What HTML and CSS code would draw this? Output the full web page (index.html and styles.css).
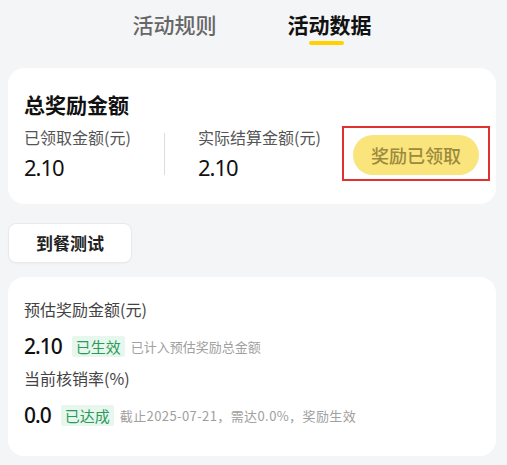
FILE: index.html
```html
<!DOCTYPE html>
<html lang="zh">
<head>
<meta charset="utf-8">
<link rel="stylesheet" href="styles.css">
</head>
<body>
<div class="tabs">
  <div class="tab">活动规则</div>
  <div class="tab active">活动数据<span class="bar"></span></div>
</div>

<section class="card summary">
  <h2 class="title">总奖励金额</h2>
  <div class="row">
    <div class="col col1">
      <div class="label">已领取金额(元)</div>
      <div class="value">2.10</div>
    </div>
    <div class="divider"></div>
    <div class="col col2">
      <div class="label">实际结算金额(元)</div>
      <div class="value">2.10</div>
    </div>
    <div class="mark">
      <div class="claimed">奖励已领取</div>
    </div>
  </div>
</section>

<div class="chip">到餐测试</div>

<section class="card detail">
  <div class="label">预估奖励金额(元)</div>
  <div class="line first">
    <span class="num">2.10</span>
    <span class="tag">已生效</span>
    <span class="note">已计入预估奖励总金额</span>
  </div>
  <div class="label second">当前核销率(%)</div>
  <div class="line last">
    <span class="num">0.0</span>
    <span class="tag">已达成</span>
    <span class="note wide">截止2025-07-21，需达0.0%，奖励生效</span>
  </div>
</section>
</body>
</html>
```
FILE: styles.css
```css
* { box-sizing: border-box; }
body {
  margin: 0;
  background: #f4f5f7;
  font-family: "Noto Sans CJK SC", "Noto Sans", sans-serif;
  color: #1a1a1a;
  width: 507px;
}
.tabs {
  display: flex;
  justify-content: center;
  gap: 71px;
  padding-top: 10px;
  height: 68px;
  padding-right: 3px;
}
.tab {
  position: relative;
  font-size: 21px;
  line-height: 28px;
  color: #666;
  font-weight: 500;
}
.tab.active {
  color: #111;
  font-weight: 700;
}
.tab .bar {
  position: absolute;
  left: 50%;
  top: 31px;
  width: 35px;
  height: 4px;
  margin-left: -21px;
  border-radius: 2px;
  background: #ffd100;
}
.card {
  margin: 0 11px 0 8px;
  background: #fff;
  border-radius: 16px;
}
.summary {
  padding: 22px 6px 23px 16px;
}
.title {
  margin: 0;
  font-size: 21px;
  line-height: 28px;
  font-weight: 700;
  color: #111;
}
.row {
  display: flex;
  align-items: center;
  margin-top: 8px;
}
.col1 { width: 140px; }
.col2 { width: 144px; margin-left: 33px; }
.label {
  font-size: 16px;
  line-height: 22px;
  color: #555;
}
.value {
  margin-top: 5px;
  font-family: "Noto Sans", sans-serif;
  font-size: 22px;
  line-height: 28px;
  letter-spacing: -1px;
  color: #111;
}
.divider {
  width: 1px;
  height: 42px;
  background: #dcdcdc;
}
.mark {
  width: 148px;
  height: 55px;
  border: 2px solid #e0312f;
  padding: 7px 9px 4px 9px;
}
.claimed {
  height: 40px;
  border-radius: 20px;
  background: #fae47c;
  color: #9c8a3e;
  font-size: 18px;
  line-height: 40px;
  text-align: center;
  font-weight: 500;
}
.chip {
  width: 122px;
  height: 38px;
  margin: 20px 0 15px 9px;
  background: #fff;
  border-radius: 7px;
  box-shadow: 0 0 0 1px #e8e9ec, 0 1px 3px rgba(0,0,0,0.06);
  font-size: 17px;
  line-height: 38px;
  text-align: center;
  font-weight: 700;
  color: #222;
}
.detail {
  padding: 21px 16px 29px 16px;
}
.detail .label { color: #444; }
.line {
  display: flex;
  align-items: center;
  height: 24px;
}
.line.first { margin-top: 14px; }
.label.second { margin-top: 9px; }
.line.last { margin-top: 14px; }
.num {
  font-family: "Noto Sans", sans-serif;
  font-size: 21px;
  font-weight: 500;
  letter-spacing: -1px;
  color: #111;
}
.tag {
  margin-left: 10px;
  padding: 0 4px;
  height: 21px;
  line-height: 21px;
  font-size: 15px;
  color: #2c9a5a;
  background: #e8f7ee;
  border-radius: 2px;
}
.note {
  margin-left: 6px;
  font-size: 13px;
  color: #a0a0a0;
}
.note.wide { letter-spacing: 0.4px; }
```
